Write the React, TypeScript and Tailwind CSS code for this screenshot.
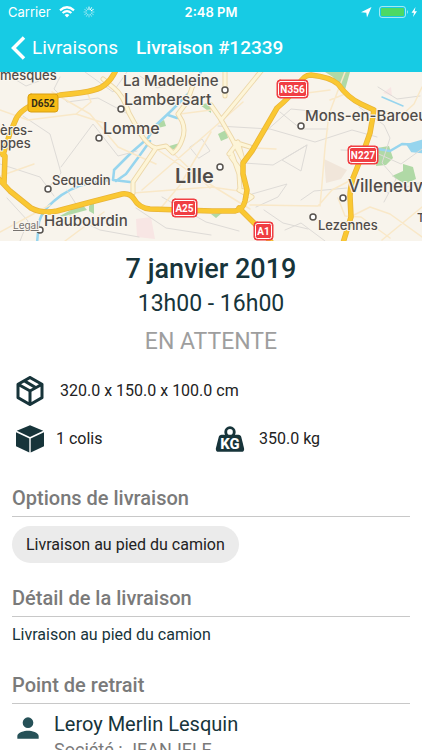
import type { ReactNode } from "react";

const INK = "#17343a";

type Label = { text: string; x: number; y: number; size: number; weight?: number };

const places: Label[] = [
  { text: "mesques", x: 0, y: 8, size: 13 },
  { text: "La Madeleine", x: 123, y: 14, size: 15 },
  { text: "Lambersart", x: 124, y: 33, size: 16 },
  { text: "Lomme", x: 103, y: 62, size: 16 },
  { text: "ères-", x: 0, y: 63, size: 13 },
  { text: "ppes", x: 0, y: 76, size: 13 },
  { text: "Sequedin", x: 52, y: 113, size: 13 },
  { text: "Haubourdin", x: 44, y: 154, size: 15 },
  { text: "Lille", x: 175, y: 111, size: 20, weight: 600 },
  { text: "Mons-en-Baroeul", x: 305, y: 49, size: 15 },
  { text: "Villeneuve", x: 348, y: 120, size: 17 },
  { text: "Lezennes", x: 318, y: 158, size: 13 },
  { text: "Tressin", x: 417, y: 150, size: 12 },
];

const dots = [
  [121, 37], [99, 66], [48, 117], [40, 158], [225, 18],
  [301, 54], [220, 95], [343, 126], [313, 145],
];

const shields = [
  { text: "D652", x: 28, y: 22, w: 30, yellow: true },
  { text: "N356", x: 277, y: 8, w: 31 },
  { text: "N227", x: 348, y: 74, w: 30 },
  { text: "A25", x: 172, y: 127, w: 25 },
  { text: "A1", x: 254, y: 150, w: 19 },
];

const highways =
  "M116-2Q108 15 94 18Q84 21 60 23L42 29Q21 36 16 47L10 61L3 83M-3 105L10 119L31 136Q42 142 57 139L91 130L122 122Q130 121 134 127Q139 136 150 137L212 139H235Q243 138 245 129L247 118L243 102V91L252 79L277 36Q290 25 298 14Q303 3 311 3Q330 5 338 12Q348 26 361 32L374 38L370 61L363 81L353 106Q350 117 350 124L351 145L343 171M239 136L254 151L272 171M-2 77L5 84L4 112";

const arterials =
  "M103 7L114 16Q123 23 129 41L140 61Q148 74 156 76L166 74L173 81Q179 77 182 68Q186 58 182 49L178 42L187 30L193 13M156 76L146 91L133 110V121M211 33L220 46L231 65L243 88M221 48L240 25L262 -2M225 24V0M229 82L238 70L243 88M232 82L239 102L240 118L247 120M231 85L242 100M234 70L250 75M239 118L252 125L245 130";

const minor =
  "M52 20L90 42L118 75L156 92M0 38L28 48L76 42L104 51M0 104L34 92M155 76L190 100L250 137M173 81L210 116M142 118L211 58L243 30M160 137L180 113L211 60M133 121L211 115L246 120M180 42L211 38M252 76L276 77M345 0L329 42L325 76L322 112L320 134M330 28L345 22M299 22L330 18M373 38L403 42L414 32L422 15M353 107L332 118L318 134L250 133M350 145L370 135L390 142L422 165M338 126L345 144L361 145L390 166M382 168L422 135M0 160L50 133M65 169L104 140M76 42L91 30L87 20";

const streets =
  "M60 5L54 17L67 30L98 26L128 42M23 44L50 62L61 101L49 115M61 95L93 52L118 84L137 79M0 92L40 105L54 124M69 143L100 158L139 165M67 118L76 132M136 136L166 156L211 163M162 125L206 150L239 159M85 0L113 20L127 0M140 4L157 16L180 11M190 75L202 67L210 79L199 86ZM218 54L270 57L315 70L352 58L377 65M280 40L301 57L328 57M265 60L291 37L322 40M244 91L273 93L307 73L301 99L282 88L307 73M252 122L287 112L278 125L256 135M301 128L314 119L347 116M264 138L283 151L308 157M285 158L301 151L325 169M359 35L384 53L390 66L382 91L396 107L384 130M378 15L397 27L420 24M341 78L372 79L401 92L422 77M371 113L388 121L422 110M8 3L26 14L39 9M7 126L28 149L20 169";

function DeliveryMap() {
  return (
    <svg
      role="img"
      aria-label="Carte de Lille"
      viewBox="0 0 422 169"
      preserveAspectRatio="xMidYMid slice"
      className="block h-[169px] w-full shrink-0 bg-[#f8f4ec]"
      fill="none"
      strokeLinecap="round"
      strokeLinejoin="round"
    >
      <g fill="#b0d9a6">
        <path d="M58 145L82 132L87 138L65 144ZM89 134L94 130V142L89 139ZM200 33L211 30V41ZM325 0H350L345 18L338 14L333 5ZM377 76L389 74L393 86L386 93L376 94ZM392 104L403 99V92L413 95L416 107L405 112ZM218 62L226 58L228 66L221 69ZM166 75L183 70L176 78ZM156 52L164 48L166 54L158 56ZM211 142L222 141L216 146Z" />
      </g>
      <path d="M324 87L347 98L341 107L326 111Z" fill="#f1e6da" />
      <path d="M383 21L391 15L392 24ZM136 147L151 145L155 167L137 165Z" fill="#f8e6e4" />
      <g stroke="#97d5ee" strokeWidth="2.5">
        <path d="M202 -2L190 20L172 38L155 54L148 66L132 80L114 98M150 69L140 83L126 102L116 109M110 108L90 111Q70 115 54 129Q42 139 39 150L37 171M114 99L113 108L130 110M168 43L177 46" />
        <path d="M382 25L403 34" strokeWidth="1.5" />
        <path d="M378 77L390 79L402 72L422 73" />
        <path d="M408 73L422 69V80L412 79Z" fill="#97d5ee" />
      </g>
      <path d={streets} stroke="#dedbd7" strokeWidth="1" />
      <path d={minor} stroke="#f9e8c8" strokeWidth="1.5" />
      <path d={arterials} stroke="#ecd7a9" strokeWidth="5" />
      <path d={arterials} stroke="#fdf5d8" strokeWidth="3.2" />
      <path d={highways} stroke="#e9b437" strokeWidth="5.5" />
      <path d={highways} stroke="#fac832" strokeWidth="4" />
      {dots.map(([x, y]) => (
        <circle key={`${x}-${y}`} cx={x} cy={y} r="3" fill="#fff" stroke="#57534f" strokeWidth="1.5" />
      ))}
      <g fontFamily="Inter, 'Liberation Sans', sans-serif" fill="#504c49" stroke="#faf6ef" strokeWidth="2" paintOrder="stroke">
        {places.map((p) => (
          <text key={p.text} x={p.x} y={p.y} fontSize={p.size} fontWeight={p.weight ?? 500}>
            {p.text}
          </text>
        ))}
        <text x="13" y="157" fontSize="10" textDecoration="underline" fill="#77736f">Legal</text>
      </g>
      <g fontFamily="Roboto, sans-serif" fontWeight="700" fontSize="10" textAnchor="middle">
        {shields.map((s) => (
          <g key={s.text}>
            <rect x={s.x} y={s.y} width={s.w} height="18" rx="3" fill={s.yellow ? "#f8bd17" : "#f03e43"} stroke={s.yellow ? "#d99f12" : "#f03e43"} />
            {!s.yellow && <rect x={s.x + 1.5} y={s.y + 1.5} width={s.w - 3} height="15" rx="2" stroke="#fff" />}
            <text x={s.x + s.w / 2} y={s.y + 12.6} fill={s.yellow ? "#342c16" : "#fff"}>{s.text}</text>
          </g>
        ))}
      </g>
    </svg>
  );
}

function PackageIcon() {
  return (
    <svg aria-hidden="true" viewBox="0 0 24 24" className="size-9" fill={INK}>
      <path d="M21,16.5C21,16.88 20.79,17.21 20.47,17.38L12.57,21.82C12.41,21.94 12.21,22 12,22C11.79,22 11.59,21.94 11.43,21.82L3.53,17.38C3.21,17.21 3,16.88 3,16.5V7.5C3,7.12 3.21,6.79 3.53,6.62L11.43,2.18C11.59,2.06 11.79,2 12,2C12.21,2 12.41,2.06 12.57,2.18L20.47,6.62C20.79,6.79 21,7.12 21,7.5V16.5M12,4.15L10.11,5.22L16,8.61L17.96,7.5L12,4.15M6.04,7.5L12,10.85L13.96,9.75L8.08,6.35L6.04,7.5M5,15.91L11,19.29V12.58L5,9.21V15.91M19,15.91V9.21L13,12.58V19.29L19,15.91Z" />
    </svg>
  );
}

function CubeIcon() {
  return (
    <svg aria-hidden="true" viewBox="0 0 36 36" className="size-9" fill={INK}>
      <path d="M18 4.2L31.200 9.800L18 16L4.800 9.800ZM4 11.300L17.300 17.400V31.500L4 25.300ZM32 11.300L18.700 17.400V31.500L32 25.300Z" />
    </svg>
  );
}

function WeightIcon() {
  return (
    <svg aria-hidden="true" viewBox="0 0 24 24" className="size-[34px]" fill={INK}>
      <path d="M12,3A4,4 0 0,1 16,7C16,7.73 15.81,8.41 15.46,9H18C18.95,9 19.75,9.67 19.95,10.56C21.96,18.57 22,18.78 22,19A2,2 0 0,1 20,21H4A2,2 0 0,1 2,19C2,18.78 2.04,18.57 4.05,10.56C4.25,9.67 5.05,9 6,9H8.54C8.19,8.41 8,7.73 8,7A4,4 0 0,1 12,3M12,5A2,2 0 0,0 10,7A2,2 0 0,0 12,9A2,2 0 0,0 14,7A2,2 0 0,0 12,5" />
      <text x="12" y="18.800" textAnchor="middle" fontFamily="Roboto, sans-serif" fontWeight="800" fontSize="10.500" fill="#fff">KG</text>
    </svg>
  );
}

function StatusBar() {
  return (
    <div className="grid h-6 grid-cols-3 items-center px-2 font-[Inter,sans-serif] text-[13px] leading-4">
      <div className="flex items-center gap-2">
        <span>Carrier</span>
        <svg aria-hidden="true" viewBox="0 0 16 12" className="h-3 w-4" fill="none" stroke="#fff" strokeWidth="2.2">
          <path d="M1 4.3Q8-1.8 15 4.3M3.6 7Q8 3.3 12.4 7" />
          <path d="M5.6 9Q8 7 10.4 9L8 11.5Z" fill="#fff" stroke="none" />
        </svg>
        <svg aria-hidden="true" viewBox="0 0 12 12" className="size-3" stroke="#fff" strokeWidth="1" strokeLinecap="round">
          <path d="M6 1V3.5M8.5 1.7L7.3 3.8M10.3 3.5L8.2 4.7" />
          <path d="M11 6H8.5M10.3 8.5L8.2 7.3M8.5 10.3L7.3 8.2M6 11V8.5M3.5 10.3L4.7 8.2M1.7 8.5L3.8 7.3M1 6H3.5M1.7 3.5L3.8 4.7M3.5 1.7L4.7 3.8" opacity=".5" />
        </svg>
      </div>
      <span className="text-center font-semibold">2:48 PM</span>
      <svg aria-hidden="true" viewBox="0 0 58 14" className="-mr-1 h-3.5 w-[58px] justify-self-end" fill="#fff">
        <path d="M1 7.2L11.5 2L7 12.5L6.3 7.7Z" />
        <rect x="19.5" y="1.5" width="26" height="11" rx="2.5" fill="none" stroke="#fff" strokeOpacity=".6" />
        <rect x="21" y="3" width="23" height="8" rx="1" fill="#4cd964" />
        <path d="M47 5Q49 7 47 9Z" opacity=".6" />
        <path d="M55.5 2L51.5 7.7H54L53 12L57 6.3H54.6Z" />
      </svg>
    </div>
  );
}

function Section({ title, children }: { title: string; children: ReactNode }) {
  return (
    <section>
      <h2 className="border-b border-[#c8c8c8] pb-1.5 text-[20px] leading-6 font-medium text-[#7a7a7a]">{title}</h2>
      {children}
    </section>
  );
}

export default function App() {
  return (
    <div className="flex h-screen flex-col overflow-hidden bg-white font-[Roboto,sans-serif] text-[#17343a]">
      <header className="h-[72px] shrink-0 bg-[#17cbe4] text-white">
        <StatusBar />
        <nav className="flex h-12 items-center gap-[18px] pl-2.5">
          <button type="button" className="flex items-center gap-1.5 text-[19px] leading-6">
            <svg aria-hidden="true" viewBox="0 0 16 24" className="h-6 w-4" fill="none" stroke="#fff" strokeWidth="3.5">
              <path d="M14 1.5L3.5 12L14 22.5" />
            </svg>
            Livraisons
          </button>
          <h1 className="text-[19px] leading-6 font-medium">Livraison #12339</h1>
        </nav>
      </header>
      <main className="min-h-0 flex-1 overflow-y-auto [scrollbar-width:none]">
        <DeliveryMap />
        <div className="pt-3 text-center">
          <p className="text-[27px] leading-8 font-medium">7 janvier 2019</p>
          <p className="pt-[3px] text-[23px] leading-8">13h00 - 16h00</p>
          <p className="pt-1.5 text-[23px] leading-8 text-[#9e9e9e]">EN ATTENTE</p>
        </div>
        <div className="px-3 pt-[9px] text-[16px] leading-5 text-[#222]">
          <div className="flex h-12 items-center gap-3">
            <PackageIcon />
            <span>320.0 x 150.0 x 100.0 cm</span>
          </div>
          <div className="grid h-12 grid-cols-2 items-center gap-1">
            <div className="flex items-center gap-2">
              <CubeIcon />
              <span>1 colis</span>
            </div>
            <div className="flex items-center gap-3">
              <WeightIcon />
              <span>350.0 kg</span>
            </div>
          </div>
        </div>
        <div className="px-3 pt-[23px] pb-6">
          <Section title="Options de livraison">
            <div className="pt-[9px] pb-[23px]">
              <span className="inline-flex h-[37px] items-center rounded-full bg-[#ebebeb] px-3.5 text-[16px] leading-5 text-[#222]">
                Livraison au pied du camion
              </span>
            </div>
          </Section>
          <Section title="Détail de la livraison">
            <p className="pt-2 pb-7 text-[16px] leading-5">Livraison au pied du camion</p>
          </Section>
          <Section title="Point de retrait">
            <div className="flex gap-2.5 pt-1.5">
              <svg aria-hidden="true" viewBox="0 0 24 24" className="mt-0.5 size-8 shrink-0" fill="#265158">
                <path d="M12 12a4 4 0 1 0 0-8 4 4 0 0 0 0 8Zm0 2c-2.700 0-8 1.300-8 4v2h16v-2c0-2.700-5.300-4-8-4Z" />
              </svg>
              <div>
                <p className="text-[20px] leading-7">Leroy Merlin Lesquin</p>
                <p className="text-[18px] leading-6 text-[#7a7a7a]">Société : JEANJELE</p>
              </div>
            </div>
          </Section>
        </div>
      </main>
    </div>
  );
}
